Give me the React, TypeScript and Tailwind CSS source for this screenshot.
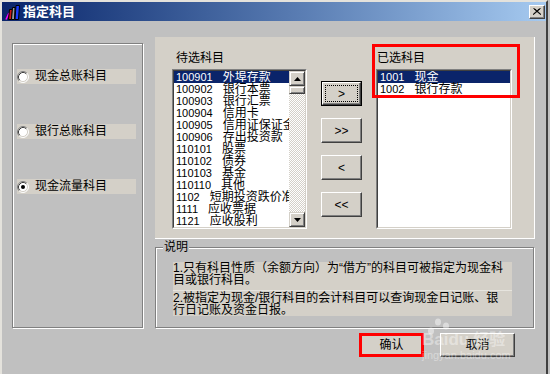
import React from "react";

type Row = { code: string; name: string; selected?: boolean };

const leftRows: Row[] = [
  { code: "100901", name: "外埠存款", selected: true },
  { code: "100902", name: "银行本票" },
  { code: "100903", name: "银行汇票" },
  { code: "100904", name: "信用卡" },
  { code: "100905", name: "信用证保证金" },
  { code: "100906", name: "存出投资款" },
  { code: "110101", name: "股票" },
  { code: "110102", name: "债券" },
  { code: "110103", name: "基金" },
  { code: "110110", name: "其他" },
  { code: "1102", name: "短期投资跌价准备" },
  { code: "1111", name: "应收票据" },
  { code: "1121", name: "应收股利" },
];

const rightRows: Row[] = [
  { code: "1001", name: "现金", selected: true },
  { code: "1002", name: "银行存款" },
];

function BookIcon() {
  return (
    <svg width="16" height="16" viewBox="0 0 16 16">
      <path d="M1 15.5 L4 9" stroke="#ff00ff" strokeWidth="1.5" />
      <path d="M3.5 15.5 L4.5 5.5 L7.5 5.5 L6.5 15.5 Z" fill="#c81818" stroke="#000" strokeWidth="1" />
      <path d="M6.5 15.5 L7.5 3.5 L10 3.5 L9.5 15.5 Z" fill="#9a9a9a" stroke="#000" strokeWidth="1" />
      <path d="M10 15.5 L11 1.5 L14.5 1.5 L13.5 15.5 Z" fill="#1a3cff" stroke="#000" strokeWidth="1" />
    </svg>
  );
}

function Radio({ checked }: { checked?: boolean }) {
  return (
    <svg width="12" height="12" viewBox="0 0 12 12" className="shrink-0">
      <circle cx="6" cy="6" r="5" fill="#fff" />
      <path d="M2.11 9.89 A5.5 5.5 0 0 1 9.89 2.11" fill="none" stroke="#808080" />
      <path d="M9.89 2.11 A5.5 5.5 0 0 1 2.11 9.89" fill="none" stroke="#fff" />
      <path d="M2.82 9.18 A4.5 4.5 0 0 1 9.18 2.82" fill="none" stroke="#404040" />
      <path d="M9.18 2.82 A4.5 4.5 0 0 1 2.82 9.18" fill="none" stroke="#d4d0c8" />
      {checked && <circle cx="6" cy="6" r="2" fill="#000" />}
    </svg>
  );
}

function RadioItem({ label, checked }: { label: string; checked?: boolean }) {
  return (
    <div className="flex h-[15px] w-[119px] items-center bg-[#d4d0c8]">
      <Radio checked={checked} />
      <span className="ml-[6px] leading-[15px]">{label}</span>
    </div>
  );
}

function Arrow({ down }: { down?: boolean }) {
  return (
    <svg width="7" height="4" viewBox="0 0 7 4">
      <path d={down ? "M0 0 H7 L3.5 4 Z" : "M0 4 H7 L3.5 0 Z"} fill="#000" />
    </svg>
  );
}

function ScrollBtn({ children, className }: { children?: React.ReactNode; className: string }) {
  return (
    <div
      className={
        "flex items-center justify-center bg-[#d4d0c8] border border-t-[#d4d0c8] border-l-[#d4d0c8] border-r-[#404040] border-b-[#404040] shadow-[inset_1px_1px_0_#fff,inset_-1px_-1px_0_#808080] " +
        className
      }
    >
      {children}
    </div>
  );
}

function ListRow({ row }: { row: Row }) {
  return (
    <div
      className={
        row.selected
          ? "flex h-[12px] items-center whitespace-nowrap bg-[#0a246a] pl-[2px] leading-[12px] text-white"
          : "flex h-[12px] items-center whitespace-nowrap pl-[2px] leading-[12px]"
      }
    >
      <span className="text-[11px]">{row.code}</span>
      <span className="ml-[10px]">{row.name}</span>
    </div>
  );
}

function Sunken({ children, className }: { children: React.ReactNode; className: string }) {
  return (
    <div className={"border border-t-[#808080] border-l-[#808080] border-r-white border-b-white " + className}>
      <div className="flex h-full border border-t-[#404040] border-l-[#404040] border-r-[#d4d0c8] border-b-[#d4d0c8] bg-white">
        {children}
      </div>
    </div>
  );
}

function MoveBtn({ label, focused }: { label: string; focused?: boolean }) {
  if (focused) {
    return (
      <div className="h-[25px] w-[41px] border border-black">
        <div className="flex h-full items-center justify-center bg-[#d4d0c8] border border-t-white border-l-white border-r-[#404040] border-b-[#404040] shadow-[inset_-1px_-1px_0_#808080]">
          <div className="flex h-[17px] w-[33px] items-center justify-center border border-dotted border-black text-[12px]">
            {label}
          </div>
        </div>
      </div>
    );
  }
  return (
    <div className="flex h-[25px] w-[41px] items-center justify-center bg-[#d4d0c8] border border-t-white border-l-white border-r-[#404040] border-b-[#404040] shadow-[inset_-1px_-1px_0_#808080] text-[12px]">
      {label}
    </div>
  );
}

export default function App() {
  return (
    <div className="relative h-[374px] w-[550px] overflow-hidden bg-[#c0c0c0] font-['Liberation_Sans','Noto_Sans_CJK_SC',sans-serif] text-[12px] text-black">
      <div className="flex h-full w-[548px] flex-col border-t-2 border-l-2 border-t-[#e4e2dc] border-l-[#e4e2dc] border-r-2 border-r-[#404040]">
        {/* title bar */}
        <div className="flex h-[19px] items-center bg-linear-to-r from-[#0a246a] to-[#a6caf0] pl-[3px] pr-[1px]">
          <BookIcon />
          <span className="ml-[2px] text-[13px] font-bold leading-[19px] text-white">指定科目</span>
          <div className="ml-auto flex h-[14px] w-[16px] items-center justify-center bg-[#d4d0c8] border border-t-white border-l-white border-r-[#404040] border-b-[#404040] shadow-[inset_-1px_-1px_0_#808080]">
            <svg width="8" height="7" viewBox="0 0 8 7">
              <path d="M0.5 0.5 L7.5 6.5 M7.5 0.5 L0.5 6.5 M1.5 0.5 L8 6.5 M6.5 0.5 L0 6.5" stroke="#000" strokeWidth="1" />
            </svg>
          </div>
        </div>

        {/* body */}
        <div className="flex flex-1 pl-[10px]">
          {/* radio group */}
          <div className="mt-[22px] h-[285px] w-[131px] border border-[#808080] shadow-[inset_1px_1px_0_#fff,1px_1px_0_#fff]">
            <div className="ml-[4px] mt-[25px] flex flex-col gap-[40px]">
              <RadioItem label="现金总账科目" />
              <RadioItem label="银行总账科目" />
              <RadioItem label="现金流量科目" checked />
            </div>
          </div>

          {/* right column */}
          <div className="ml-[12px] mt-[16px] flex w-[380px] flex-col">
            <div className="relative flex h-[202px] bg-[#d4d0c8] border-r border-b border-white pl-[17px] pt-[14px]">
              <div className="flex flex-col">
                <div className="h-[18px] pl-[4px] leading-[14px]">待选科目</div>
                <Sunken className="h-[160px] w-[135px]">
                  <div className="w-[115px] overflow-hidden">
                    {leftRows.map((r) => (
                      <ListRow key={r.code} row={r} />
                    ))}
                  </div>
                  <div className="flex w-[16px] flex-col bg-[image:repeating-conic-gradient(#d4d0c8_0%_25%,#ffffff_0%_50%)] bg-[length:2px_2px]">
                    <ScrollBtn className="h-[15px]">
                      <Arrow />
                    </ScrollBtn>
                    <ScrollBtn className="h-[8px]" />
                    <div className="flex-1" />
                    <ScrollBtn className="h-[15px]">
                      <Arrow down />
                    </ScrollBtn>
                  </div>
                </Sunken>
              </div>

              <div className="ml-[14px] mt-[30px] flex flex-col gap-[12px]">
                <MoveBtn label=">" focused />
                <MoveBtn label=">>" />
                <MoveBtn label="<" />
                <MoveBtn label="<<" />
              </div>

              <div className="ml-[14px] flex flex-col">
                <div className="h-[18px] pl-[1px] leading-[14px]">已选科目</div>
                <Sunken className="h-[160px] w-[136px]">
                  <div className="flex-1 overflow-hidden">
                    {rightRows.map((r) => (
                      <ListRow key={r.code} row={r} />
                    ))}
                  </div>
                </Sunken>
              </div>

              <div className="absolute left-[217px] top-[7px] h-[54px] w-[148px] border-[3px] border-[#ff0000]" />
            </div>

            {/* 说明 */}
            <div className="relative mt-[8px] h-[81px] w-[379px] border border-[#808080] shadow-[inset_1px_1px_0_#fff,1px_1px_0_#fff]">
              <span className="absolute -top-[7px] left-[7px] bg-[#c0c0c0] px-[1px] leading-[12px]">说明</span>
              <div className="ml-[17px] mt-[14px] w-[339px] whitespace-nowrap leading-[12px]">
                <div className="h-[29px] border-b border-[#e6e4de] bg-[#d4d0c8]">
                  <div>1.只有科目性质（余额方向）为“借方”的科目可被指定为现金科</div>
                  <div>目或银行科目。</div>
                </div>
                <div className="h-[25px] bg-[#d4d0c8] pt-[1px]">
                  <div>2.被指定为现金/银行科目的会计科目可以查询现金日记账、银</div>
                  <div>行日记账及资金日报。</div>
                </div>
              </div>
            </div>

            {/* dialog buttons */}
            <div className="mt-[5px] flex justify-end gap-[16px] pr-[20px]">
              <div className="relative flex h-[24px] w-[65px] items-center justify-center bg-[#d4d0c8] border border-t-white border-l-white border-r-[#404040] border-b-[#404040]">
                确认
                <div className="absolute -inset-[1px] border-[3px] border-[#ff0000]" />
              </div>
              <div className="flex h-[24px] w-[75px] items-center justify-center bg-[#d4d0c8] border border-t-white border-l-white border-r-[#404040] border-b-[#404040] shadow-[inset_-1px_-1px_0_#808080]">
                取消
              </div>
            </div>
          </div>
        </div>
      </div>

      {/* watermark */}
      <div className="pointer-events-none absolute left-[422px] top-[318px] text-white/40">
        <svg width="26" height="20" viewBox="0 0 26 20" className="absolute left-[3px] top-0">
          <ellipse cx="13" cy="4" rx="3" ry="3.5" fill="#ffffff" fillOpacity="0.45" />
          <ellipse cx="21" cy="8" rx="3" ry="3.5" fill="#ffffff" fillOpacity="0.45" />
          <ellipse cx="6" cy="13" rx="3" ry="3.5" fill="#ffffff" fillOpacity="0.45" />
        </svg>
        <div className="mt-[13px] flex items-end whitespace-nowrap text-[17px] font-bold leading-[18px]">
          <span>Baidu</span>
          <span className="ml-[4px] text-[16px]">经验</span>
        </div>
        <div className="whitespace-nowrap text-[11px] leading-[12px]">jingyan.baidu.com</div>
      </div>
    </div>
  );
}
